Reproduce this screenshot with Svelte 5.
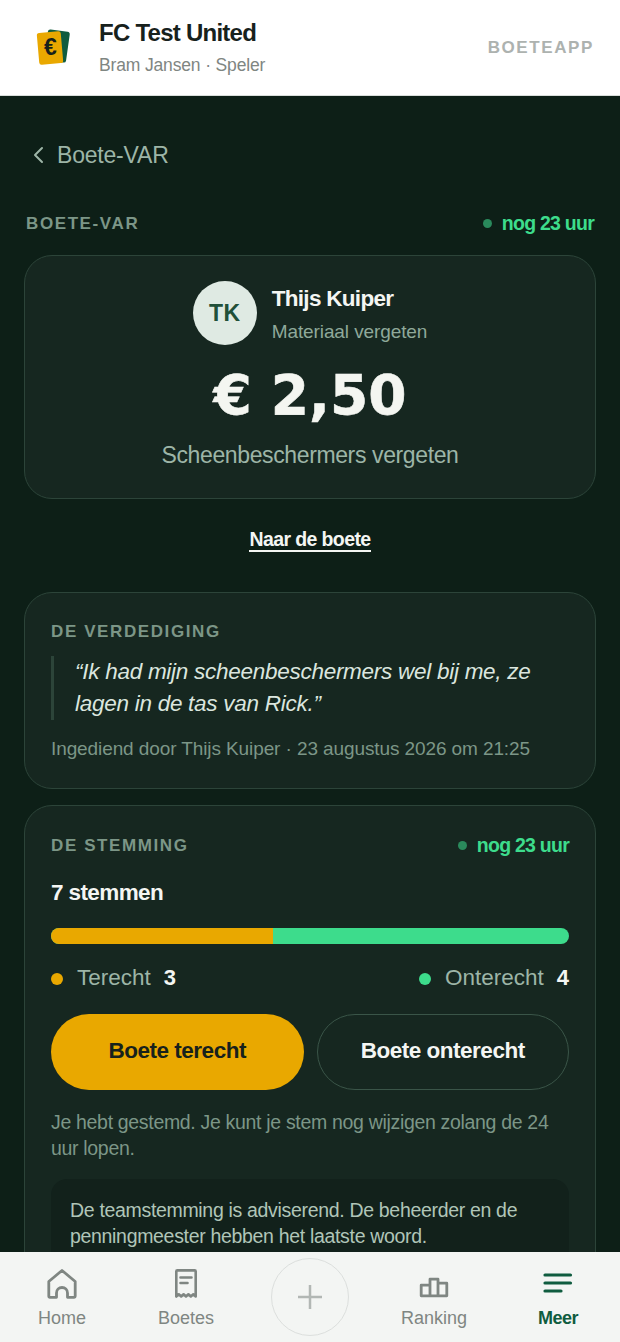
<script>
  const tabs = [
    { key: 'home', label: 'Home' },
    { key: 'boetes', label: 'Boetes' },
    { key: 'add', label: '' },
    { key: 'ranking', label: 'Ranking' },
    { key: 'meer', label: 'Meer', active: true }
  ];
</script>

<div class="page">
  <header class="top">
    <svg class="logo" viewBox="0 0 38 40" width="38" height="40">
      <rect x="13" y="2.500" width="22" height="31" rx="2.500" fill="#0f5c3f" transform="rotate(8 24 18)" />
      <rect x="5" y="4" width="24" height="32" rx="2.500" fill="#e9a800" transform="rotate(-5 17 20)" />
      <text x="17.500" y="27" text-anchor="middle" class="logo-euro">€</text>
    </svg>
    <div class="club">
      <div class="club-name">FC Test United</div>
      <div class="club-sub">Bram Jansen · Speler</div>
    </div>
    <div class="brand">BOETEAPP</div>
  </header>

  <main class="main">
    <div class="back">
      <svg viewBox="0 0 14 20" width="14" height="20" fill="none" stroke="#9db5a7" stroke-width="2" stroke-linecap="round" stroke-linejoin="round"><path d="M12 3 5 10l7 7" /></svg>
      <span>Boete-VAR</span>
    </div>

    <div class="section-head">
      <span class="eyebrow">BOETE-VAR</span>
      <span class="timer"><i class="pulse"></i>nog 23 uur</span>
    </div>

    <section class="card hero">
      <div class="person">
        <div class="avatar">TK</div>
        <div class="person-text">
          <div class="person-name">Thijs Kuiper</div>
          <div class="person-cat">Materiaal vergeten</div>
        </div>
      </div>
      <div class="amount">€ 2,50</div>
      <div class="reason">Scheenbeschermers vergeten</div>
    </section>

    <div class="link-row"><a href="#boete" class="link">Naar de boete</a></div>

    <section class="card defense">
      <div class="eyebrow small">DE VERDEDIGING</div>
      <blockquote>“Ik had mijn scheenbeschermers wel bij me, ze lagen in de tas van Rick.”</blockquote>
      <div class="meta">Ingediend door Thijs Kuiper · 23 augustus 2026 om 21:25</div>
    </section>

    <section class="card vote">
      <div class="section-head inner">
        <span class="eyebrow small">DE STEMMING</span>
        <span class="timer"><i class="pulse"></i>nog 23 uur</span>
      </div>
      <div class="count">7 stemmen</div>
      <div class="bar"><div class="bar-yes" style="width: 42.86%"></div></div>
      <div class="legend">
        <span class="leg"><i class="dot amber"></i><span class="leg-label">Terecht</span><b>3</b></span>
        <span class="leg"><i class="dot green"></i><span class="leg-label">Onterecht</span><b>4</b></span>
      </div>
      <div class="buttons">
        <button class="btn primary">Boete terecht</button>
        <button class="btn ghost">Boete onterecht</button>
      </div>
      <p class="hint">Je hebt gestemd. Je kunt je stem nog wijzigen zolang de 24 uur lopen.</p>
      <div class="note">De teamstemming is adviserend. De beheerder en de penningmeester hebben het laatste woord.</div>
    </section>
  </main>

  <nav class="nav">
    {#each tabs as t}
      <div class="tab" class:active={t.active}>
        {#if t.key === 'home'}
          <svg viewBox="0 0 32 32" width="32" height="32" fill="none" stroke="#7f8682" stroke-width="2.800" stroke-linejoin="round" stroke-linecap="round"><path d="M2.800 13.500 16 2.500l13.200 11v14.800a1 1 0 0 1-1 1h-6.700v-4.300a5.500 5.500 0 0 0-11 0v4.300H3.800a1 1 0 0 1-1-1z" /></svg>
        {:else if t.key === 'boetes'}
          <svg viewBox="0 0 32 32" width="32" height="32" fill="none" stroke="#7f8682" stroke-width="2.600" stroke-linejoin="round" stroke-linecap="round"><path d="M6.300 28.500V3.400a1 1 0 0 1 1-1h17.400a1 1 0 0 1 1 1v25.100l-2.400-2.200-2.500 2.200-2.400-2.200-2.400 2.200-2.400-2.200-2.400 2.200-2.400-2.200z" /><path d="M10.500 9.500h11M10.500 15h7" /></svg>
        {:else if t.key === 'ranking'}
          <svg viewBox="0 0 32 32" width="32" height="32" fill="none" stroke="#7f8682" stroke-width="2.800" stroke-linejoin="round"><path d="M3.200 17.200H12v10.600H3.200zM12 11.200h8v16.600h-8zM20 15.200h8.800v12.600H20z" /></svg>
        {:else if t.key === 'meer'}
          <svg viewBox="0 0 32 32" width="32" height="32" fill="none" stroke="#0f5c3f" stroke-width="3.200" stroke-linecap="round"><path d="M3 7h25.500M3 15h25.500M3 23h16" /></svg>
        {:else}
          <div class="add"><svg viewBox="0 0 28 28" width="28" height="28" fill="none" stroke="#b2b7b4" stroke-width="2.500"><path d="M14 2v24M2 14h24" /></svg></div>
        {/if}
        {#if t.label}<span class="tab-label">{t.label}</span>{/if}
      </div>
    {/each}
  </nav>
</div>

<style>
  :global(body) {
    margin: 0;
    background: #0d1f17;
    font-family: "Liberation Sans", Arial, sans-serif;
    overflow: hidden;
  }
  .page { height: 1342px; overflow: hidden; position: relative; }
  .top {
    height: 95px;
    background: #fff;
    border-bottom: 1px solid #d9dedb;
    display: flex;
    align-items: center;
    padding: 0 26px 0 33px;
    box-sizing: content-box;
  }
  .logo { margin-right: 28px; flex: none; }
  .logo-euro { font: 700 23px "Liberation Sans", sans-serif; fill: #16201b; }
  .club { flex: 1; }
  .club-name { font-size: 24px; font-weight: 700; color: #17211c; letter-spacing: -0.75px; line-height: 28px; }
  .club-sub { font-size: 17.500px; color: #7f8682; line-height: 22px; margin-top: 7px; letter-spacing: -0.15px; }
  .brand { font-size: 17px; font-weight: 700; letter-spacing: 1.600px; color: #adb2af; }
  .main { padding: 0 24px; }
  .back { display: flex; align-items: center; gap: 13px; height: 28px; margin-top: 45px; padding-left: 6px; color: #9db5a7; font-size: 23px; letter-spacing: -0.2px; }
  .section-head { display: flex; justify-content: space-between; align-items: center; height: 24px; margin-top: 42px; padding: 0 2px; }
  .section-head.inner { margin: 0; padding: 0; }
  .eyebrow { font-size: 17px; font-weight: 700; letter-spacing: 1.600px; color: #7c9687; padding-top: 2px; }
  .timer { display: flex; align-items: center; color: #3ddc8c; font-size: 19.500px; font-weight: 700; letter-spacing: -0.75px; }
  .pulse { width: 9px; height: 9px; border-radius: 50%; background: #2a8a5c; margin-right: 10px; }
  .card { background: #162720; border: 1px solid #2c4439; border-radius: 28px; box-sizing: border-box; }
  .hero { height: 244px; margin-top: 20px; padding-top: 25px; text-align: center; }
  .person { display: flex; justify-content: center; align-items: center; gap: 15px; text-align: left; }
  .person-text { padding-top: 8px; }
  .avatar { width: 64px; height: 64px; border-radius: 50%; background: #dfeae3; color: #215039; font-weight: 700; font-size: 23px; display: flex; align-items: center; justify-content: center; letter-spacing: 0.3px; }
  .person-name { color: #f4f6f3; font-size: 22.500px; font-weight: 700; letter-spacing: -0.7px; line-height: 28px; margin-top: -6px; }
  .person-cat { color: #8fa99a; font-size: 19px; line-height: 24px; margin-top: 7px; letter-spacing: -0.1px; }
  .amount { font-family: "DejaVu Sans", sans-serif; font-weight: 700; color: #f4f6f1; font-size: 55px; line-height: 62px; margin-top: 19px; -webkit-text-stroke: 0.6px #f4f6f1; }
  .reason { color: #9db5a7; font-size: 23px; line-height: 30px; margin-top: 14px; letter-spacing: -0.38px; }
  .link-row { text-align: center; margin-top: 29px; height: 26px; }
  .link { color: #f4f6f3; font-size: 19.500px; font-weight: 700; letter-spacing: -0.6px; text-decoration: none; border-bottom: 2px solid #f4f6f3; }
  .defense { height: 197px; margin-top: 38px; padding: 26px 26px 0; }
  .small { font-size: 17px; display: block; line-height: 24px; padding-top: 0; transform: translateY(1px); }
  blockquote { margin: 13px 0 0; padding-left: 21px; border-left: 3px solid #2c4439; color: #dbe6df; font-style: italic; font-size: 22.500px; line-height: 32px; letter-spacing: -0.27px; }
  .meta { color: #7c9687; font-size: 19px; line-height: 24px; margin-top: 17px; letter-spacing: -0.1px; white-space: nowrap; }
  .vote { margin-top: 16px; padding: 27px 26px 0; height: 700px; }
  .count { color: #f4f6f3; font-size: 22.500px; font-weight: 700; letter-spacing: -0.6px; line-height: 28px; margin-top: 22px; }
  .bar { height: 16px; border-radius: 8px; overflow: hidden; background: #3ddc8c; margin-top: 21px; }
  .bar-yes { height: 100%; background: #e9a800; }
  .legend { display: flex; justify-content: space-between; margin-top: 19px; height: 30px; align-items: center; }
  .leg { display: flex; align-items: center; font-size: 22.500px; color: #9db5a7; }
  .leg b { color: #f4f6f3; margin-left: 13px; font-size: 22px; }
  .dot { width: 12px; height: 12px; border-radius: 50%; margin-right: 14px; margin-top: 2px; }
  .amber { background: #e9a800; }
  .green { background: #3ddc8c; }
  .buttons { display: grid; grid-template-columns: 1fr 1fr; gap: 13px; margin-top: 21px; }
  .btn { height: 76px; border-radius: 38px; font: 700 22.500px "Liberation Sans", sans-serif; letter-spacing: -0.5px; padding: 0 0 3px; }
  .primary { background: #e9a800; border: 0; color: #17211c; }
  .ghost { background: transparent; border: 1.500px solid #3a5548; color: #f4f6f3; }
  .hint { margin: 19px 0 0; color: #7c9687; font-size: 19.500px; line-height: 26px; letter-spacing: -0.32px; }
  .note { margin-top: 18px; background: #12211b; border-radius: 16px; padding: 18px 19px; color: #b0c5b8; font-size: 19.500px; line-height: 26px; letter-spacing: -0.32px; }
  .nav { position: absolute; left: 0; right: 0; bottom: 0; height: 90px; background: #f3f5f3; display: grid; grid-template-columns: repeat(5, 124px); }
  .tab { display: flex; flex-direction: column; align-items: center; padding-top: 16px; box-sizing: border-box; color: #7f8682; }
  .tab-label { font-size: 18px; line-height: 22px; margin-top: 7px; }
  .active { color: #0f5c3f; font-weight: 700; letter-spacing: -0.5px; }
  .add { width: 78px; height: 78px; margin-top: -10px; border-radius: 50%; border: 1px solid #dcdfdd; box-sizing: border-box; display: flex; align-items: center; justify-content: center; }
</style>
